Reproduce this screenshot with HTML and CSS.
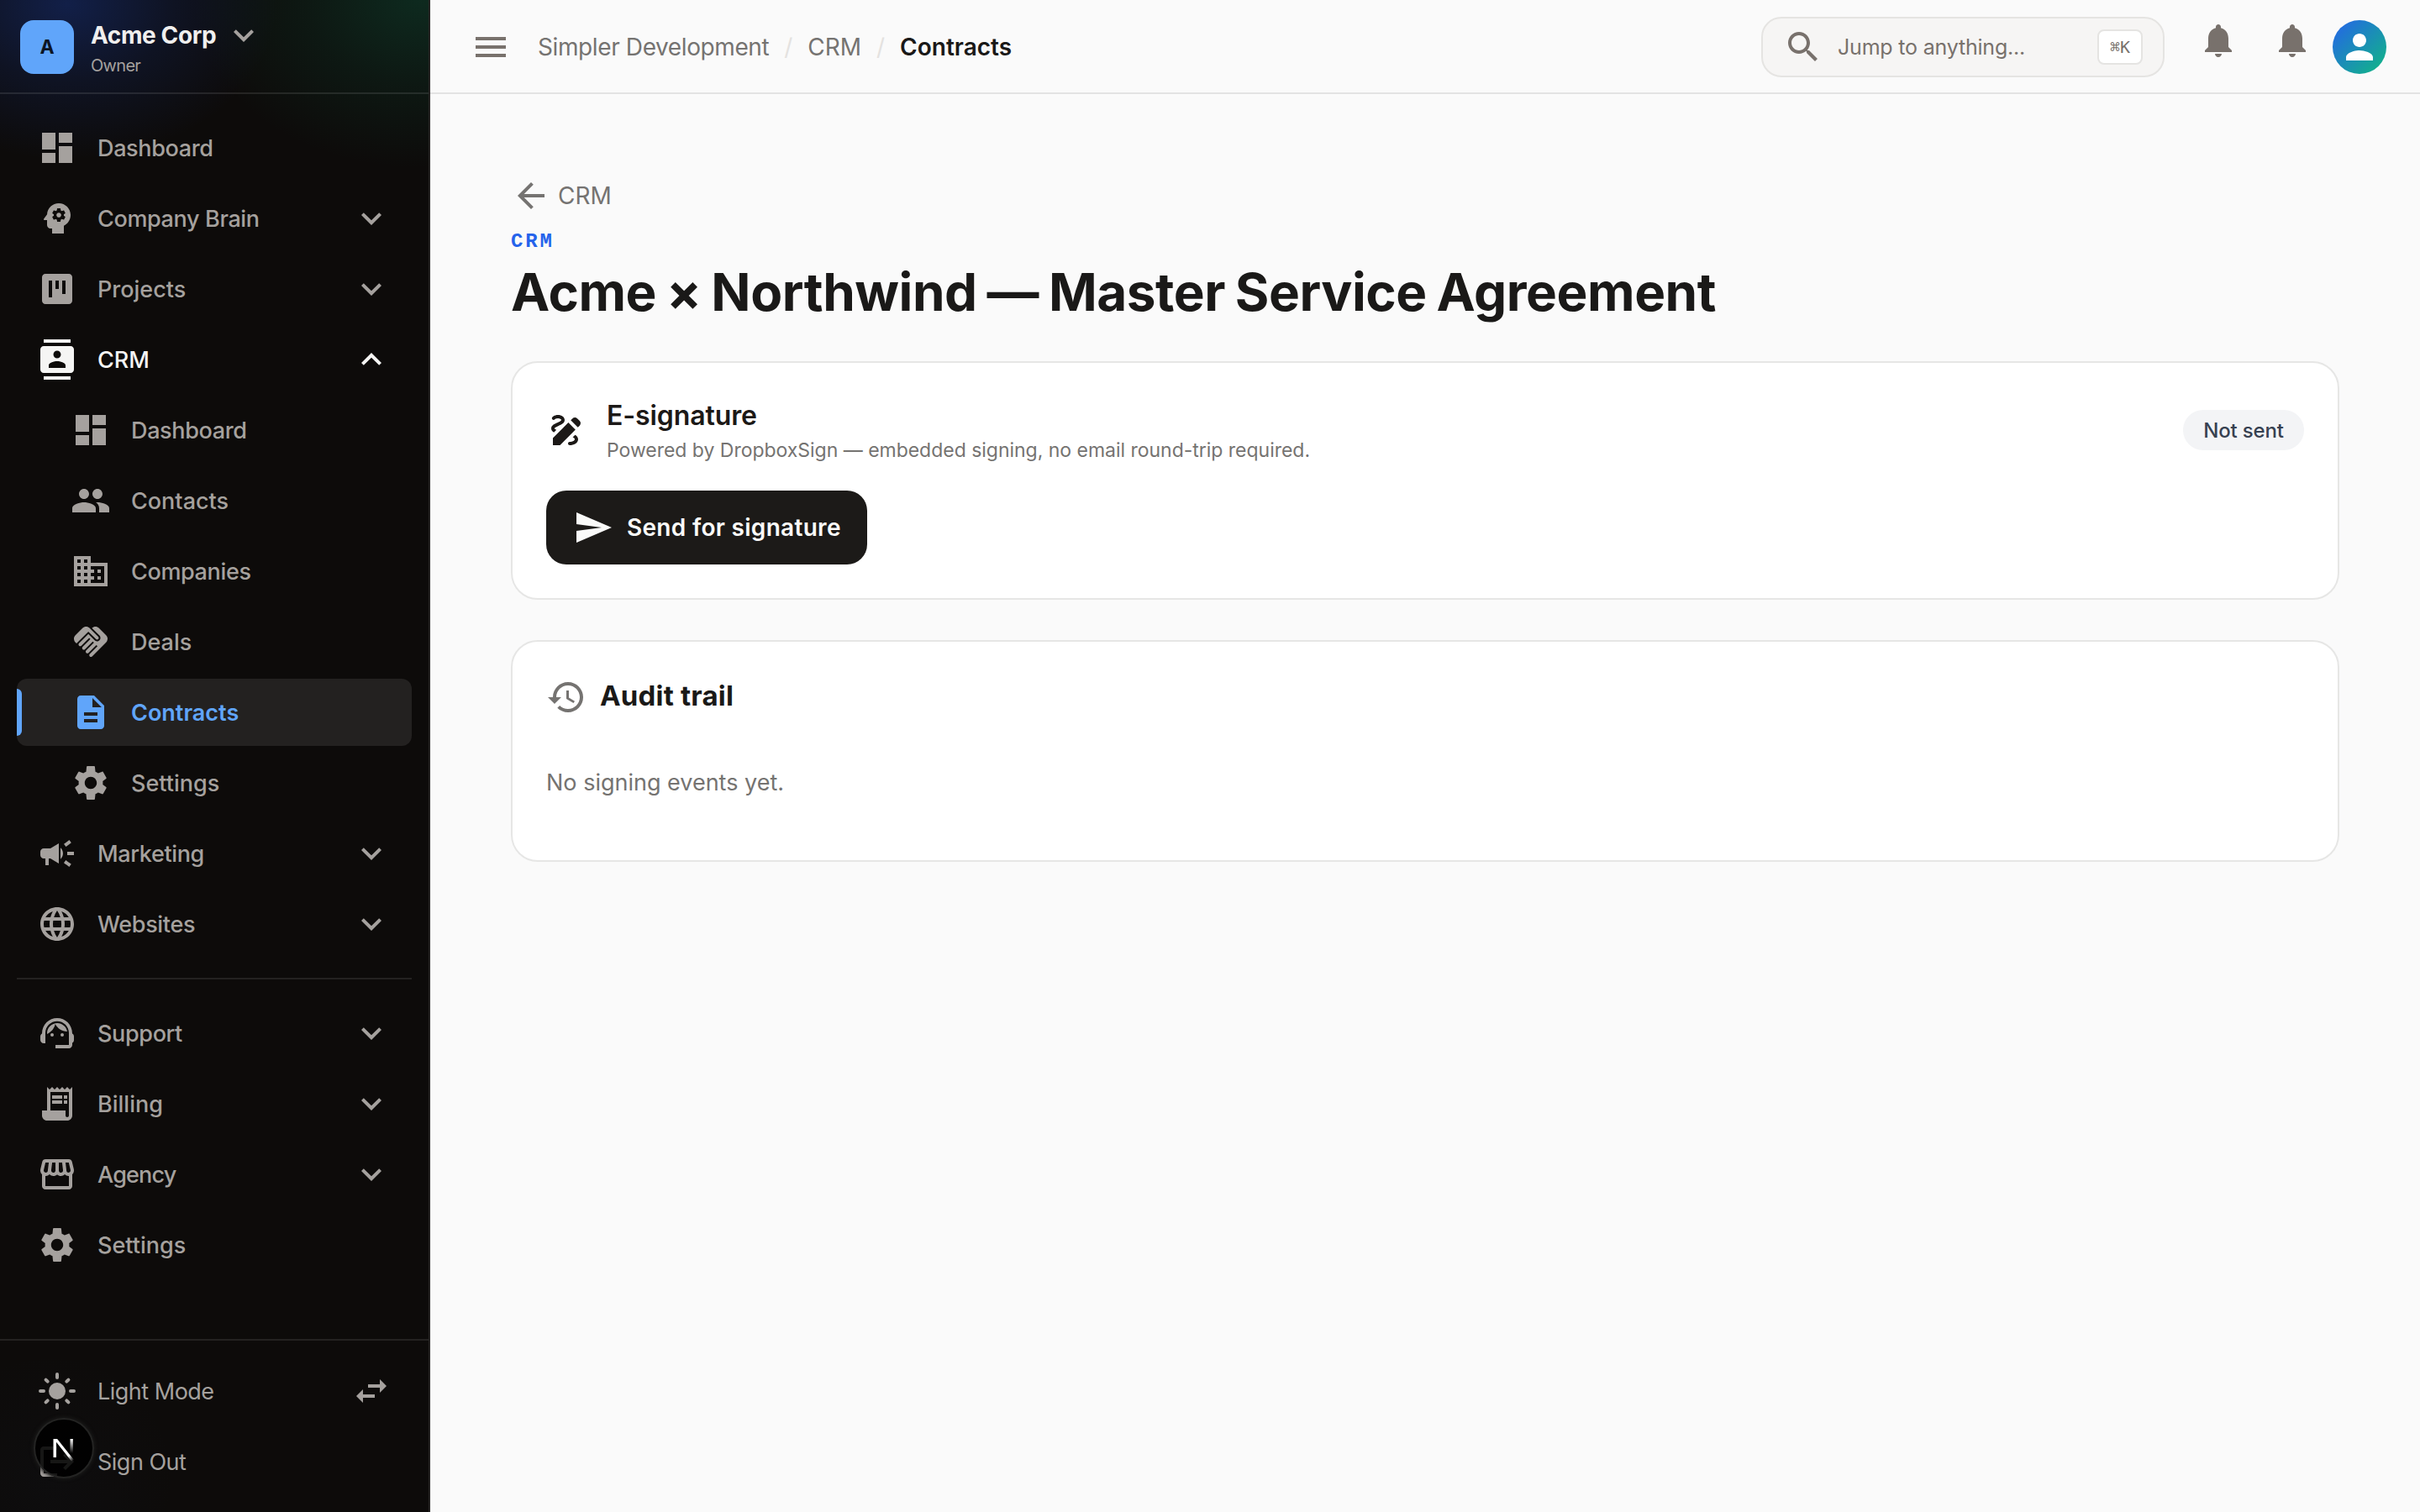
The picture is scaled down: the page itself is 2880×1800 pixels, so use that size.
FILE: index.html
```html
<!DOCTYPE html>
<html lang="en">
<head>
<meta charset="utf-8">
<title>Contracts · Acme Corp</title>
<link rel="stylesheet" href="styles.css">
</head>
<body>
<svg class="sprite" aria-hidden="true">
  <symbol id="i-down" viewBox="0 0 24 24"><path d="M16.59 8.59 12 13.17 7.41 8.59 6 10l6 6 6-6z"/></symbol>
  <symbol id="i-up" viewBox="0 0 24 24"><path d="m12 8-6 6 1.41 1.41L12 10.83l4.59 4.58L18 14z"/></symbol>
  <symbol id="i-dashboard" viewBox="0 0 24 24"><path d="M3 13h8V3H3v10zm0 8h8v-6H3v6zm10 0h8V11h-8v10zm0-18v6h8V3h-8z"/></symbol>
  <symbol id="i-brain" viewBox="0 0 24 24"><path d="M13 8.57c-.79 0-1.43.64-1.43 1.43s.64 1.43 1.43 1.43 1.43-.64 1.43-1.43-.64-1.43-1.43-1.43z"/><path d="M13 3C9.25 3 6.2 5.94 6.02 9.64L4.1 12.2c-.25.33-.01.8.4.8H6v3c0 1.1.9 2 2 2h1v3h7v-4.68c2.36-1.12 4-3.53 4-6.32 0-3.87-3.13-7-7-7zm3 7c0 .13-.01.26-.02.39l.83.66c.08.06.1.16.05.25l-.8 1.39c-.05.09-.16.12-.24.09l-.99-.4c-.21.16-.43.29-.67.39L14 13.83c-.01.1-.1.17-.2.17h-1.6c-.1 0-.18-.07-.2-.17l-.15-1.06c-.25-.1-.47-.23-.68-.39l-.99.4c-.09.03-.2 0-.25-.09l-.8-1.39c-.05-.08-.03-.19.05-.25l.84-.66c-.01-.13-.02-.26-.02-.39s.02-.27.04-.39l-.85-.66c-.08-.06-.1-.16-.05-.26l.8-1.38c.05-.09.15-.12.24-.09l1 .4c.2-.15.43-.29.67-.39L12 6.17c.02-.1.1-.17.2-.17h1.6c.1 0 .18.07.2.17l.15 1.06c.24.1.46.23.67.39l1-.4c.09-.03.2 0 .24.09l.8 1.38c.05.09.03.2-.05.26l-.85.66c.03.12.04.25.04.39z"/></symbol>
  <symbol id="i-kanban" viewBox="0 0 24 24"><path d="M19 3H5c-1.1 0-2 .9-2 2v14c0 1.1.9 2 2 2h14c1.1 0 2-.9 2-2V5c0-1.1-.9-2-2-2zM9 17H7V7h2v10zm4-5h-2V7h2v5zm4 3h-2V7h2v8z"/></symbol>
  <symbol id="i-crm" viewBox="0 0 24 24"><path d="M20 0H4v2h16V0zM4 24h16v-2H4v2zM20 4H4c-1.1 0-2 .9-2 2v12c0 1.1.9 2 2 2h16c1.1 0 2-.9 2-2V6c0-1.1-.9-2-2-2zm-8 2.75c1.24 0 2.25 1.01 2.25 2.25s-1.01 2.25-2.25 2.25S9.75 10.24 9.75 9 10.76 6.75 12 6.75zM17 17H7v-1.5c0-1.67 3.33-2.5 5-2.5s5 .83 5 2.5V17z"/></symbol>
  <symbol id="i-people" viewBox="0 0 24 24"><path d="M16 11c1.66 0 2.99-1.34 2.99-3S17.66 5 16 5c-1.66 0-3 1.34-3 3s1.34 3 3 3zm-8 0c1.66 0 2.99-1.34 2.99-3S9.66 5 8 5C6.34 5 5 6.34 5 8s1.34 3 3 3zm0 2c-2.33 0-7 1.17-7 3.5V19h14v-2.5c0-2.33-4.67-3.5-7-3.5zm8 0c-.29 0-.62.02-.97.05 1.16.84 1.97 1.97 1.97 3.45V19h6v-2.5c0-2.33-4.67-3.5-7-3.5z"/></symbol>
  <symbol id="i-business" viewBox="0 0 24 24"><path d="M12 7V3H2v18h20V7H12zM6 19H4v-2h2v2zm0-4H4v-2h2v2zm0-4H4V9h2v2zm0-4H4V5h2v2zm4 12H8v-2h2v2zm0-4H8v-2h2v2zm0-4H8V9h2v2zm0-4H8V5h2v2zm10 12h-8v-2h2v-2h-2v-2h2v-2h-2V9h8v10zm-2-8h-2v2h2v-2zm0 4h-2v2h2v-2z"/></symbol>
  <symbol id="i-handshake" viewBox="0 0 24 24"><path d="M16.48 10.41c-.39.39-1.04.39-1.43 0l-4.47-4.46-7.05 7.04-.66-.63c-1.17-1.17-1.17-3.07 0-4.24l4.24-4.24c1.17-1.17 3.07-1.17 4.24 0L16.48 9c.39.39.39 1.02 0 1.41zm.7-2.12c.78.78.78 2.05 0 2.83-1.27 1.27-2.61.22-2.83 0l-3.76-3.76-5.57 5.57c-.39.39-.39 1.02 0 1.41.39.39 1.02.39 1.42 0l4.62-4.62.71.71-4.62 4.62c-.39.39-.39 1.02 0 1.41.39.39 1.02.39 1.42 0l4.62-4.62.71.71-4.62 4.62c-.39.39-.39 1.02 0 1.41.39.39 1.02.39 1.41 0l4.62-4.62.71.71-4.62 4.62c-.39.39-.39 1.02 0 1.41.39.39 1.02.39 1.41 0l8.32-8.34c1.17-1.17 1.17-3.07 0-4.24l-4.24-4.24c-1.15-1.15-3.01-1.17-4.18-.06l4.47 4.47z"/></symbol>
  <symbol id="i-doc" viewBox="0 0 24 24"><path d="M14 2H6c-1.1 0-1.99.9-1.99 2L4 20c0 1.1.89 2 1.99 2H18c1.1 0 2-.9 2-2V8l-6-6zm2 16H8v-2h8v2zm0-4H8v-2h8v2zm-3-5V3.5L18.5 9H13z"/></symbol>
  <symbol id="i-settings" viewBox="0 0 24 24"><path d="M19.14 12.94c.04-.3.06-.61.06-.94 0-.32-.02-.64-.07-.94l2.03-1.58c.18-.14.23-.41.12-.61l-1.92-3.32c-.12-.22-.37-.29-.59-.22l-2.39.96c-.5-.38-1.03-.7-1.62-.94l-.3-2.94C14.42 2.17 14.26 2 14.02 2H9.98c-.24 0-.4.17-.44.41l-.3 2.94c-.59.24-1.13.57-1.62.94l-2.39-.96c-.22-.08-.47 0-.59.22L2.74 8.87c-.12.21-.08.47.12.61l2.03 1.58c-.05.3-.09.63-.09.94s.02.64.07.94l-2.03 1.58c-.18.14-.23.41-.12.61l1.92 3.32c.12.22.37.29.59.22l2.39-.96c.5.38 1.03.7 1.62.94l.3 2.94c.05.24.2.41.44.41h4.04c.24 0 .4-.17.44-.41l.3-2.94c.59-.24 1.13-.56 1.62-.94l2.39.96c.22.08.47 0 .59-.22l1.92-3.32c.12-.22.07-.47-.12-.61l-2.01-1.58zM12 15.6c-1.98 0-3.6-1.62-3.6-3.6s1.62-3.6 3.6-3.6 3.6 1.62 3.6 3.6-1.62 3.6-3.6 3.6z"/></symbol>
  <symbol id="i-campaign" viewBox="0 0 24 24"><path d="M18 11v2h4v-2h-4zm-2 6.61c.96.71 2.21 1.65 3.2 2.39.4-.53.8-1.07 1.2-1.6-.99-.74-2.24-1.68-3.2-2.4-.4.54-.8 1.08-1.2 1.61zM20.4 5.6c-.4-.53-.8-1.07-1.2-1.6-.99.74-2.24 1.68-3.2 2.4.4.53.8 1.07 1.2 1.6.96-.72 2.21-1.65 3.2-2.4zM4 9c-1.1 0-2 .9-2 2v2c0 1.1.9 2 2 2h1v4h2v-4h1l5 3V6L8 9H4zm11.5 3c0-1.33-.58-2.53-1.5-3.35v6.69c.92-.81 1.5-2.01 1.5-3.34z"/></symbol>
  <symbol id="i-globe" viewBox="0 0 24 24"><path d="M11.99 2C6.47 2 2 6.48 2 12s4.47 10 9.99 10C17.52 22 22 17.52 22 12S17.52 2 11.99 2zm6.93 6h-2.95c-.32-1.25-.78-2.45-1.38-3.56 1.84.63 3.37 1.91 4.33 3.56zM12 4.04c.83 1.2 1.48 2.53 1.91 3.96h-3.82c.43-1.43 1.08-2.76 1.91-3.96zM4.26 14C4.1 13.36 4 12.69 4 12s.1-1.36.26-2h3.38c-.08.66-.14 1.32-.14 2s.06 1.34.14 2H4.26zm.82 2h2.95c.32 1.25.78 2.45 1.38 3.56-1.84-.63-3.37-1.9-4.33-3.56zm2.95-8H5.08c.96-1.66 2.49-2.93 4.33-3.56C8.81 5.55 8.35 6.75 8.03 8zM12 19.96c-.83-1.2-1.48-2.53-1.91-3.96h3.82c-.43 1.43-1.08 2.76-1.91 3.96zM14.34 14H9.66c-.09-.66-.16-1.32-.16-2s.07-1.35.16-2h4.68c.09.65.16 1.32.16 2s-.07 1.34-.16 2zm.25 5.56c.6-1.11 1.06-2.31 1.38-3.56h2.95c-.96 1.65-2.49 2.93-4.33 3.56zM16.36 14c.08-.66.14-1.32.14-2s-.06-1.34-.14-2h3.38c.16.64.26 1.31.26 2s-.1 1.36-.26 2h-3.38z"/></symbol>
  <symbol id="i-support" viewBox="0 0 24 24"><path d="M21 12.22C21 6.73 16.74 3 12 3c-4.69 0-9 3.65-9 9.28-.6.34-1 .98-1 1.72v2c0 1.1.9 2 2 2h1v-6.1c0-3.87 3.13-7 7-7s7 3.13 7 7V19h-8v2h8c1.1 0 2-.9 2-2v-1.22c.59-.31 1-.92 1-1.64v-2.3c0-.7-.41-1.31-1-1.62z"/><circle cx="9" cy="13" r="1"/><circle cx="15" cy="13" r="1"/><path d="M18 11.03C17.52 8.18 15.04 6 12.05 6c-3.03 0-6.29 2.51-6.03 6.45 2.47-1.01 4.33-3.21 4.86-5.89 1.31 2.63 4 4.44 7.12 4.47z"/></symbol>
  <symbol id="i-receipt" viewBox="0 0 24 24"><path d="M19.5 3.5 18 2l-1.5 1.5L15 2l-1.5 1.5L12 2l-1.5 1.5L9 2 7.5 3.5 6 2v14H3v3c0 1.66 1.34 3 3 3h12c1.66 0 3-1.34 3-3V2l-1.5 1.5zM19 19c0 .55-.45 1-1 1s-1-.45-1-1v-3H8V5h11v14z"/><path d="M9 7h6v2H9zm7 0h2v2h-2zm-7 3h6v2H9zm7 0h2v2h-2z"/></symbol>
  <symbol id="i-store" viewBox="0 0 24 24"><path d="m21.9 8.89-1.05-4.37c-.22-.9-1-1.52-1.91-1.52H5.05c-.9 0-1.69.63-1.9 1.52L2.1 8.89c-.24 1.02-.02 2.06.62 2.88.08.11.19.19.28.29V19c0 1.1.9 2 2 2h14c1.1 0 2-.9 2-2v-6.94c.09-.09.2-.18.28-.28.64-.82.87-1.87.62-2.89zm-2.99-3.9 1.05 4.37c.1.42.01.84-.25 1.17-.14.18-.44.47-.94.47-.61 0-1.14-.49-1.21-1.14L16.98 5l1.93-.01zM13 5h1.96l.54 4.52c.05.39-.07.78-.33 1.07-.22.26-.54.41-.95.41-.67 0-1.22-.59-1.22-1.31V5zM8.49 9.52 9.04 5H11v4.69c0 .72-.55 1.31-1.29 1.31-.34 0-.65-.15-.89-.41-.25-.29-.37-.68-.33-1.07zm-4.45-.16L5.05 5h1.97l-.58 4.86c-.08.65-.6 1.14-1.21 1.14-.49 0-.8-.29-.93-.47-.27-.32-.36-.75-.26-1.17zM5 19v-6.03c.08.01.15.03.23.03.87 0 1.66-.36 2.24-.95.6.6 1.4.95 2.31.95.87 0 1.65-.36 2.23-.93.59.57 1.39.93 2.29.93.84 0 1.64-.35 2.24-.95.58.59 1.37.95 2.24.95.08 0 .15-.02.23-.03V19H5z"/></symbol>
  <symbol id="i-sun" viewBox="0 0 24 24"><circle cx="12" cy="12" r="5"/><path d="M12 2v2M12 20v2M2 12h2M20 12h2M5.28 5.28l1.06 1.06M17.66 17.66l1.06 1.06M18.72 5.28l-1.06 1.06M6.34 17.66l-1.06 1.06" fill="none" stroke="currentColor" stroke-width="2" stroke-linecap="round"/></symbol>
  <symbol id="i-swap" viewBox="0 0 24 24"><path d="M6.99 11 3 15l3.99 4v-3H14v-2H6.99v-3zM21 9l-3.99-4v3H10v2h7.01v3L21 9z"/></symbol>
  <symbol id="i-logout" viewBox="0 0 24 24"><path d="m17 7-1.41 1.41L18.17 11H8v2h10.17l-2.58 2.58L17 17l5-5zM4 5h8V3H4c-1.1 0-2 .9-2 2v14c0 1.1.9 2 2 2h8v-2H4V5z"/></symbol>
  <symbol id="i-menu" viewBox="0 0 24 24"><path d="M3 18h18v-2H3v2zm0-5h18v-2H3v2zm0-7v2h18V6H3z"/></symbol>
  <symbol id="i-search" viewBox="0 0 24 24"><path d="M15.5 14h-.79l-.28-.27C15.41 12.59 16 11.11 16 9.5 16 5.91 13.09 3 9.5 3S3 5.91 3 9.5 5.91 16 9.5 16c1.61 0 3.09-.59 4.23-1.57l.27.28v.79l5 4.99L20.49 19l-4.99-5zm-6 0C7.01 14 5 11.99 5 9.5S7.01 5 9.5 5 14 7.01 14 9.5 11.99 14 9.5 14z"/></symbol>
  <symbol id="i-bell" viewBox="0 0 24 24"><path d="M12 22c1.1 0 2-.9 2-2h-4c0 1.1.89 2 2 2zm6-6v-5c0-3.07-1.64-5.64-4.5-6.32V4c0-.83-.67-1.5-1.5-1.5s-1.5.67-1.5 1.5v.68C7.63 5.36 6 7.92 6 11v5l-2 2v1h16v-1l-2-2z"/></symbol>
  <symbol id="i-person" viewBox="0 0 24 24"><path d="M12 12c2.21 0 4-1.79 4-4s-1.79-4-4-4-4 1.79-4 4 1.79 4 4 4zm0 2c-2.67 0-8 1.34-8 4v2h16v-2c0-2.66-5.33-4-8-4z"/></symbol>
  <symbol id="i-back" viewBox="0 0 24 24"><path d="M20 11H7.83l5.59-5.59L12 4l-8 8 8 8 1.41-1.41L7.83 13H20v-2z"/></symbol>
  <symbol id="i-draw" viewBox="0 0 24 24"><path d="m18.85 10.39 1.06-1.06c.78-.78.78-2.05 0-2.83L18.5 5.09c-.78-.78-2.05-.78-2.83 0l-1.06 1.06 4.24 4.24zM13.19 7.56 4 16.76V21h4.24l9.19-9.19-4.24-4.25zM19 17.5c0 2.19-2.54 3.5-5 3.5-.55 0-1-.45-1-1s.45-1 1-1c1.54 0 3-.73 3-1.5 0-.47-.48-.87-1.23-1.2l1.48-1.48c1.07.63 1.75 1.47 1.75 2.68zM4.58 13.35C3.61 12.79 3 12.06 3 11c0-1.8 1.89-2.63 3.56-3.36C7.59 7.18 9 6.56 9 6c0-.41-.78-1-2-1-1.26 0-1.8.61-1.83.64-.35.41-.98.46-1.4.12-.41-.34-.49-.95-.15-1.38C3.73 4.24 4.76 3 7 3s4 1.32 4 3c0 1.87-1.93 2.72-3.64 3.47C6.42 9.88 5 10.5 5 11c0 .31.43.6 1.07.86l-1.49 1.49z"/></symbol>
  <symbol id="i-send" viewBox="0 0 24 24"><path d="M2.01 21 23 12 2.01 3 2 10l15 2-15 2z"/></symbol>
  <symbol id="i-history" viewBox="0 0 24 24"><path d="M13 3c-4.97 0-9 4.03-9 9H1l3.89 3.89.07.14L9 12H6c0-3.87 3.13-7 7-7s7 3.13 7 7-3.13 7-7 7c-1.93 0-3.68-.79-4.94-2.06l-1.42 1.42C8.27 19.99 10.51 21 13 21c4.97 0 9-4.03 9-9s-4.03-9-9-9zm-1 5v5l4.28 2.54.72-1.21-3.5-2.08V8H12z"/></symbol>
</svg>

<div class="app">
  <aside class="sidebar">
    <div class="org">
      <div class="org-logo">A</div>
      <div class="org-text">
        <div class="org-name">Acme Corp</div>
        <div class="org-role">Owner</div>
      </div>
      <svg class="icon org-chevron"><use href="#i-down"/></svg>
    </div>

    <nav class="nav">
      <a class="item"><svg class="icon"><use href="#i-dashboard"/></svg><span class="label snug">Dashboard</span></a>
      <a class="item"><svg class="icon"><use href="#i-brain"/></svg><span class="label snug">Company Brain</span><svg class="icon"><use href="#i-down"/></svg></a>
      <a class="item"><svg class="icon"><use href="#i-kanban"/></svg><span class="label">Projects</span><svg class="icon"><use href="#i-down"/></svg></a>
      <a class="item open"><svg class="icon"><use href="#i-crm"/></svg><span class="label">CRM</span><svg class="icon"><use href="#i-up"/></svg></a>
      <a class="item sub"><svg class="icon"><use href="#i-dashboard"/></svg><span class="label snug">Dashboard</span></a>
      <a class="item sub"><svg class="icon"><use href="#i-people"/></svg><span class="label">Contacts</span></a>
      <a class="item sub"><svg class="icon"><use href="#i-business"/></svg><span class="label snug">Companies</span></a>
      <a class="item sub"><svg class="icon"><use href="#i-handshake"/></svg><span class="label">Deals</span></a>
      <a class="item sub active"><svg class="icon"><use href="#i-doc"/></svg><span class="label">Contracts</span></a>
      <a class="item sub"><svg class="icon"><use href="#i-settings"/></svg><span class="label">Settings</span></a>
      <a class="item"><svg class="icon"><use href="#i-campaign"/></svg><span class="label snug">Marketing</span><svg class="icon"><use href="#i-down"/></svg></a>
      <a class="item"><svg class="icon"><use href="#i-globe"/></svg><span class="label snug">Websites</span><svg class="icon"><use href="#i-down"/></svg></a>
      <hr class="divider">
      <a class="item"><svg class="icon"><use href="#i-support"/></svg><span class="label snug">Support</span><svg class="icon"><use href="#i-down"/></svg></a>
      <a class="item"><svg class="icon"><use href="#i-receipt"/></svg><span class="label">Billing</span><svg class="icon"><use href="#i-down"/></svg></a>
      <a class="item"><svg class="icon"><use href="#i-store"/></svg><span class="label tight">Agency</span><svg class="icon"><use href="#i-down"/></svg></a>
      <a class="item"><svg class="icon"><use href="#i-settings"/></svg><span class="label">Settings</span></a>
    </nav>

    <div class="side-foot">
      <a class="item plain"><svg class="icon"><use href="#i-sun"/></svg><span class="label snug">Light Mode</span><svg class="icon"><use href="#i-swap"/></svg></a>
      <a class="item plain"><svg class="icon"><use href="#i-logout"/></svg><span class="label snug">Sign Out</span></a>
    </div>

    <div class="dev-badge">
      <svg viewBox="0 0 72 72">
        <defs>
          <linearGradient id="fade-stem" x1="0" y1="25" x2="0" y2="42" gradientUnits="userSpaceOnUse"><stop offset="0" stop-color="#fff"/><stop offset="1" stop-color="#fff" stop-opacity="0"/></linearGradient>
          <linearGradient id="fade-leg" x1="38" y1="38" x2="47" y2="51" gradientUnits="userSpaceOnUse"><stop offset="0" stop-color="#fff"/><stop offset=".5" stop-color="#fff"/><stop offset="1" stop-color="#fff" stop-opacity="0"/></linearGradient>
        </defs>
        <rect x="43.5" y="25" width="3.4" height="17" fill="url(#fade-stem)"/>
        <path d="M23.5 47V25h4.6L48 50l-2.6 2L27 28.8V47z" fill="url(#fade-leg)"/>
      </svg>
    </div>
  </aside>

  <div class="page">
    <header class="topbar">
      <svg class="icon"><use href="#i-menu"/></svg>
      <nav class="crumbs">
        <a class="crumb">Simpler Development</a>
        <span class="slash">/</span>
        <a class="crumb short">CRM</a>
        <span class="slash">/</span>
        <span class="crumb here">Contracts</span>
      </nav>
      <div class="search">
        <svg class="icon"><use href="#i-search"/></svg>
        <span class="search-text">Jump to anything...</span>
        <kbd class="kbd">⌘K</kbd>
      </div>
      <svg class="icon bell"><use href="#i-bell"/></svg>
      <svg class="icon bell"><use href="#i-bell"/></svg>
      <div class="avatar"><svg class="icon"><use href="#i-person"/></svg></div>
    </header>

    <main class="main">
      <a class="back"><svg class="icon"><use href="#i-back"/></svg><span>CRM</span></a>
      <div class="eyebrow">CRM</div>
      <h1 class="title">Acme × Northwind — Master Service Agreement</h1>

      <section class="card">
        <div class="card-head">
          <svg class="icon"><use href="#i-draw"/></svg>
          <div class="card-text">
            <h2 class="card-title">E-signature</h2>
            <p class="card-sub">Powered by DropboxSign — embedded signing, no email round-trip required.</p>
          </div>
          <span class="badge">Not sent</span>
        </div>
        <button class="send"><svg class="icon"><use href="#i-send"/></svg><span>Send for signature</span></button>
      </section>

      <section class="card audit">
        <div class="audit-head">
          <svg class="icon"><use href="#i-history"/></svg>
          <h2 class="audit-title">Audit trail</h2>
        </div>
        <p class="empty">No signing events yet.</p>
      </section>
    </main>
  </div>
</div>
</body>
</html>
```
FILE: styles.css
```css
* { box-sizing: border-box; margin: 0; padding: 0; }

body {
  font-family: "Inter", "Liberation Sans", sans-serif;
  font-size: 28px;
  color: #1c1917;
  background: #fafafa;
}

.sprite { display: none; }

.icon {
  display: block;
  flex: none;
  width: 48px;
  height: 48px;
  fill: currentColor;
}

.app { display: flex; width: 2880px; height: 1800px; overflow: hidden; }

/* Sidebar */
.sidebar {
  position: relative;
  flex: none;
  display: flex;
  flex-direction: column;
  width: 512px;
  border-right: 2px solid #262423;
  color: #a5a19e;
  background:
    radial-gradient(250px 185px at 80px 5px, rgba(29, 78, 216, .3), rgba(29, 78, 216, .12) 50%, transparent),
    radial-gradient(270px 200px at 500px 0, rgba(16, 130, 90, .26), rgba(16, 130, 90, .11) 50%, transparent),
    radial-gradient(150px 150px at 60px 1760px, rgba(30, 60, 110, .04), transparent),
    #0d0b0a;
}

.org {
  flex: none;
  display: flex;
  align-items: flex-start;
  height: 112px;
  padding: 24px 24px 0;
  border-bottom: 2px solid rgba(255, 255, 255, .1);
}

.org-logo {
  display: flex;
  align-items: center;
  justify-content: center;
  width: 64px;
  height: 64px;
  border-radius: 16px;
  background: #60a5fa;
  color: #0c1524;
  font-size: 23px;
  font-weight: 700;
}

.org-text { margin: -2px 5px 0 20px; }
.org-name { font-weight: 700; line-height: 40px; letter-spacing: -.4px; color: #f0efee; }
.org-role { font-size: 20px; line-height: 32px; letter-spacing: -.7px; }
.org-chevron { margin: -6px 0 0 4px; }

.nav { flex: 1; display: flex; flex-direction: column; gap: 4px; padding: 24px 20px 0; }

.item {
  flex: none;
  display: flex;
  align-items: center;
  gap: 24px;
  height: 80px;
  padding: 0 24px;
  border-radius: 12px;
  font-size: 27px;
  font-weight: 500;
}

.item.sub { padding-left: 64px; }
.item.open { color: #f5f5f4; }
.item.plain { font-weight: 400; }

.item.active {
  position: relative;
  color: #60a5fa;
  background: #232120;
  font-weight: 600;
}

.item.active::before {
  content: "";
  position: absolute;
  left: 0;
  top: 12px;
  width: 6px;
  height: 56px;
  border-radius: 0 6px 6px 0;
  background: #60a5fa;
}

.label { flex: 1; padding-top: 1px; white-space: nowrap; }
.label.snug { letter-spacing: -.36px; }
.label.tight { letter-spacing: -.8px; }
.item.plain .label { letter-spacing: -.5px; }

.divider { flex: none; height: 2px; margin: 20px 0; border: 0; background: #242221; }

.side-foot {
  flex: none;
  display: flex;
  flex-direction: column;
  gap: 4px;
  padding: 20px;
  border-top: 2px solid #242221;
}

.dev-badge {
  position: absolute;
  left: 40px;
  top: 1688px;
  width: 72px;
  height: 72px;
  border-radius: 50%;
  background: rgba(0, 0, 0, .86);
  border: 2px solid #242423;
  box-shadow: 0 0 4px 1px #1b1b1a;
}

.dev-badge svg { display: block; width: 72px; height: 72px; margin: -2px; }

/* Page */
.page { flex: 1; display: flex; flex-direction: column; }

.topbar {
  flex: none;
  display: flex;
  align-items: center;
  height: 112px;
  padding: 2px 40px 0 48px;
  border-bottom: 2px solid #e3e3e3;
  color: #78716c;
}

.crumbs { flex: 1; display: flex; align-items: center; margin-left: 32px; }
.crumb { color: #757371; letter-spacing: -.39px; }
.crumb.short { letter-spacing: 0; }
.crumb.here { color: #1a1918; font-weight: 600; letter-spacing: 0; }
.slash { width: 46px; text-align: center; color: #e4e2e0; }

.search {
  display: flex;
  align-items: center;
  width: 480px;
  height: 72px;
  margin-right: 40px;
  padding: 0 24px;
  border: 2px solid #e5e4e2;
  border-radius: 24px;
  background: #f6f5f4;
}

.search-text { flex: 1; margin-left: 17px; font-size: 25px; letter-spacing: -.2px; }

.kbd {
  display: flex;
  align-items: center;
  justify-content: center;
  width: 54px;
  height: 42px;
  border: 2px solid #e5e4e2;
  border-radius: 8px;
  background: #fff;
  font: 20px "DejaVu Sans Mono", monospace;
}

.bell { align-self: flex-start; margin: 22px 40px 0 0; }
.bell + .avatar { margin-left: -16px; }

.avatar {
  display: flex;
  align-items: center;
  justify-content: center;
  width: 64px;
  height: 64px;
  border-radius: 50%;
  color: #fff;
  background: linear-gradient(135deg, #2563eb, #10b981);
}

.main { flex: 1; padding: 96px 96px 0; }

.back { display: flex; align-items: center; gap: 8px; padding-top: 1px; margin-bottom: -1px; color: #757371; letter-spacing: 0; }

.eyebrow {
  margin-top: 16px;
  font: bold 24px/32px "Liberation Mono", monospace;
  letter-spacing: 2.8px;
  color: #2563eb;
}

.title {
  margin: 9px 0 47px;
  font-size: 62px;
  line-height: 70px;
  font-weight: 700;
  letter-spacing: -.45px;
  word-spacing: -2.4px;
  white-space: nowrap;
  color: #1a1918;
}

.card {
  padding: 40px;
  border: 2px solid #e6e6e5;
  border-radius: 32px;
  background: #fff;
}

.card-head { display: flex; align-items: center; gap: 24px; }
.card-text { flex: 1; }
.card-title { font-size: 32px; line-height: 45px; font-weight: 600; letter-spacing: -.1px; }
.card-sub { margin-bottom: -3px; font-size: 23px; line-height: 38px; letter-spacing: -.02px; color: #757371; }

.badge {
  display: flex;
  align-items: center;
  justify-content: center;
  width: 144px;
  height: 48px;
  border-radius: 24px;
  background: #f3f4f6;
  color: #374151;
  font-size: 24px;
  font-weight: 500;
  letter-spacing: -.15px;
}

.send {
  display: flex;
  align-items: center;
  gap: 16px;
  width: 382px;
  height: 88px;
  margin-top: 32px;
  padding-left: 32px;
  border: 0;
  border-radius: 24px;
  background: #1c1a18;
  color: #fafaf9;
  font: 600 28px "Inter", sans-serif;
  letter-spacing: .3px;
  white-space: nowrap;
}

.audit { margin-top: 48px; padding-bottom: 72px; }
.audit-head { display: flex; align-items: center; gap: 16px; height: 52px; color: #757371; }
.audit-title { margin-bottom: 4px; font-size: 33px; line-height: 48px; font-weight: 700; letter-spacing: .2px; color: #1a1918; }
.empty { margin-top: 56px; font-size: 27px; line-height: 40px; color: #757371; }
```
